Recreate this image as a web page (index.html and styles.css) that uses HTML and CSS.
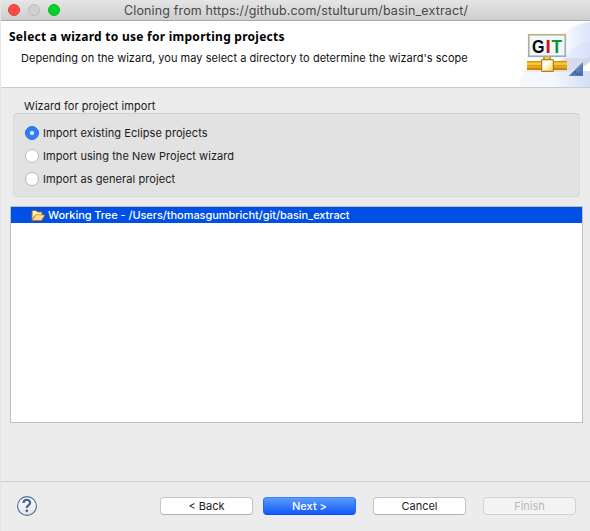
FILE: index.html
```html
<!DOCTYPE html>
<html lang="en">
<head>
<meta charset="utf-8">
<title>Cloning from https://github.com/stulturum/basin_extract/</title>
<link rel="stylesheet" href="styles.css">
</head>
<body>
<main class="window">
  <header class="titlebar">
    <div class="lights"><span class="light close"></span><span class="light minimize"></span><span class="light maximize"></span></div>
    <span class="window-title">Cloning from https://github.com/stulturum/basin_extract/</span>
  </header>
  <section class="banner">
    <div class="banner-text">
      <h1>Select a wizard to use for importing projects</h1>
      <p>Depending on the wizard, you may select a directory to determine the wizard's scope</p>
    </div>
    <svg class="banner-art" width="75" height="66" viewBox="0 0 75 66">
      <defs>
        <linearGradient id="sky" x1="0" y1="0" x2="1" y2="0"><stop offset="0" stop-color="#ffffff"/><stop offset=".45" stop-color="#f3f6fe"/><stop offset="1" stop-color="#dde5fb"/></linearGradient>
        <linearGradient id="low" x1="0" y1="0" x2="1" y2="0"><stop offset="0" stop-color="#f6f8fe"/><stop offset=".5" stop-color="#f3f6fe"/><stop offset="1" stop-color="#d3ddf8"/></linearGradient>
        <linearGradient id="shade" x1="0" y1="0" x2="1" y2="0"><stop offset="0" stop-color="#e2e2e6" stop-opacity=".4"/><stop offset=".6" stop-color="#dcdfe8"/><stop offset="1" stop-color="#d0d8ec"/></linearGradient>
        <linearGradient id="pipe" x1="0" y1="0" x2="0" y2="1"><stop offset="0" stop-color="#c88c0a"/><stop offset=".3" stop-color="#ffd03c"/><stop offset=".6" stop-color="#f0b01c"/><stop offset="1" stop-color="#b87600"/></linearGradient>
        <linearGradient id="box" x1="0" y1="0" x2="1" y2="1"><stop offset="0" stop-color="#fff"/><stop offset=".45" stop-color="#fffbe4"/><stop offset="1" stop-color="#f6c647"/></linearGradient>
        <linearGradient id="frame" x1="0" y1="0" x2="0" y2="1"><stop offset="0" stop-color="#bbb28b"/><stop offset="1" stop-color="#9aabc0"/></linearGradient>
        <linearGradient id="corner" x1="0" y1="0" x2="1" y2="1"><stop offset="0" stop-color="#8ba5d0"/><stop offset="1" stop-color="#4668ac"/></linearGradient>
      </defs>
      <path d="M36 38C40 17 54 3 75 1V38Z" fill="url(#sky)"/>
      <path d="M48 38C54 28 64 22 75 21V38Z" fill="#cbd8f6" opacity=".3"/>
      <path d="M4 66C5 59 7 54 11 50H75V66Z" fill="url(#low)"/>
      <path d="M6 51Q13 46 24 46L52 37H75V41Q65 50 47 51Z" fill="url(#shade)"/>
      <rect x="13.75" y="13.75" width="36.5" height="21.5" fill="#f0f8fc" stroke="url(#frame)" stroke-width="1.7"/>
      <g class="git-label"><text class="git-g" x="17" y="31.8" textLength="12.5" lengthAdjust="spacingAndGlyphs">G</text><text class="git-i" x="30.4" y="31.8">I</text><text class="git-t" x="36.5" y="31.8" textLength="10.5" lengthAdjust="spacingAndGlyphs">T</text></g>
      <path d="M28 36H36V40H28Z" fill="#d99b16"/><path d="M30 36H34V40H30Z" fill="#ffcf48"/>
      <rect x="12" y="40" width="40" height="9" fill="url(#pipe)"/>
      <path d="M12 44.5H52" stroke="#d69b18"/>
      <rect x="26.6" y="38.6" width="11.8" height="11.8" rx="1" fill="url(#box)" stroke="#b67a17" stroke-width="1.2"/>
      <path d="M68 41V55H53.5Z" fill="url(#corner)"/>
      <path d="M57 54L60 50L61 53L65 52" stroke="#2f5292" stroke-width=".8" fill="none"/>
    </svg>
  </section>
  <section class="content">
    <h2 class="group-label">Wizard for project import</h2>
    <div class="group">
      <label class="option"><i class="radio selected"></i><span>Import existing Eclipse projects</span></label>
      <label class="option"><i class="radio"></i><span>Import using the New Project wizard</span></label>
      <label class="option"><i class="radio"></i><span>Import as general project</span></label>
    </div>
    <div class="tree">
      <div class="tree-row">
        <svg width="15" height="13" viewBox="0 0 15 13"><path d="M1 11V2.5L2 1.5H5L6.5 3H11V6" fill="#ffefb0" stroke="#a66d22"/><path d="M1 11.5L4.5 6H14L10.5 11.5Z" fill="#ffd985" stroke="#b77320"/><path d="M5 7H12.5" stroke="#fff2bd"/></svg>
        <span>Working Tree - /Users/thomasgumbricht/git/basin_extract</span>
      </div>
    </div>
  </section>
  <footer class="footer">
    <svg class="help" width="22" height="22" viewBox="0 0 22 22"><defs><linearGradient id="hg" x1="0" y1="0" x2="0" y2="1"><stop offset="0" stop-color="#fff"/><stop offset="1" stop-color="#e2e4e9"/></linearGradient></defs><circle cx="11" cy="11" r="9.4" fill="url(#hg)" stroke="#526a98" stroke-width="1.1"/><path d="M7.5 8.1C7.5 3.9 14.3 4 14.1 7.8C14 10.2 10.8 10.2 10.8 13" fill="none" stroke="#4d6594" stroke-width="2.3"/><circle cx="10.8" cy="15.8" r="1.4" fill="#4d6594"/></svg>
    <div class="buttons">
      <button>&lt; Back</button>
      <button class="primary">Next &gt;</button>
      <button class="cancel">Cancel</button>
      <button disabled>Finish</button>
    </div>
  </footer>
</main>
</body>
</html>
```
FILE: styles.css
```css
* { box-sizing: border-box; }
body { margin: 0; background: #ececec; font-family: Inter, "Liberation Sans", sans-serif; font-size: 11px; color: #202020; }
.window { width: 590px; height: 531px; display: flex; flex-direction: column; overflow: hidden; border-left: 1px solid #e4e4e4; white-space: nowrap; }
.titlebar { height: 21px; flex: none; display: flex; align-items: center; background: linear-gradient(#e5e5e5, #cecece); border-bottom: 1px solid #a9a9a9; }
.lights { display: flex; gap: 8px; width: 123px; padding-left: 7px; }
.light { width: 12px; height: 12px; border-radius: 50%; border: 1px solid; }
.close { background: #ff4b46; border-color: #e33e38; }
.minimize { background: #d0d0d0; border-color: #bcbcbc; }
.maximize { background: #07cf29; border-color: #08b923; }
.window-title { font-size: 12.5px; color: #484848; letter-spacing: .14px; line-height: 20px; padding-top: 1px; }
.banner { height: 67px; flex: none; display: flex; justify-content: space-between; background: #fff; border-bottom: 1px solid #cbcbcb; }
.banner-text { padding: 7px 0 0 8px; }
h1 { margin: 0; font: bold 12px/18px "Noto Sans", sans-serif; letter-spacing: .26px; color: #000; }
p { margin: 4px 0 0 12px; line-height: 16px; letter-spacing: .035px; color: #111; }
.banner-art { display: block; flex: none; }
.git-label { font: bold 19px "Liberation Sans", sans-serif; }
.git-g { fill: #080808; }
.git-i { fill: #d80e20; }
.git-t { fill: #0c9435; }
.content { flex: none; height: 393px; padding: 11px 7px 0 9px; }
.group-label { margin: 0 0 0 14px; font-size: 11px; font-weight: 400; line-height: 14px; letter-spacing: .06px; }
.group { height: 84px; margin: 0 3px 0 3px; padding: 7px 11px; border: 1px solid #dadada; border-top-color: #d0d0d0; border-radius: 4px; background: #e2e2e2; }
.option { display: flex; align-items: center; height: 23px; gap: 4px; letter-spacing: .07px; }
.radio { width: 14px; height: 14px; border-radius: 50%; background: #fff; border: 1px solid #b9b9b9; }
.radio.selected { display: flex; align-items: center; justify-content: center; background: #2f7cf6; border-color: #2870e7; }
.selected::after { content: ""; width: 4px; height: 4px; border-radius: 50%; background: #fff; }
.tree { height: 217px; margin-top: 9px; border: 1px solid #bfbfbf; background: #fff; }
.tree-row { height: 16px; display: flex; align-items: center; gap: 2px; padding-left: 20px; background: #0050e6; color: #fff; font-weight: 500; letter-spacing: -.06px; }
.footer { height: 50px; border-top: 1px solid #cfcfcf; display: flex; align-items: flex-start; justify-content: space-between; padding: 13px 14px 0 15px; }
.buttons { display: flex; gap: 10px; padding-top: 2px; }
button { width: 93px; height: 18px; padding: 0; border: 1px solid #c5c5c5; border-bottom-color: #afafaf; border-radius: 4px; background: #fff; color: #202020; font: 11px/15px Inter, sans-serif; }
.primary { color: #fff; font-weight: 500; background: linear-gradient(#5a9bfa, #1159fa); border-color: #3d80f2 #246af1 #0b4fe8; }
.cancel { margin-left: 7px; }
button:disabled { margin-left: 7px; background: #f3f3f3; color: #b9b9b9; border-color: #d2d2d2; }
```
